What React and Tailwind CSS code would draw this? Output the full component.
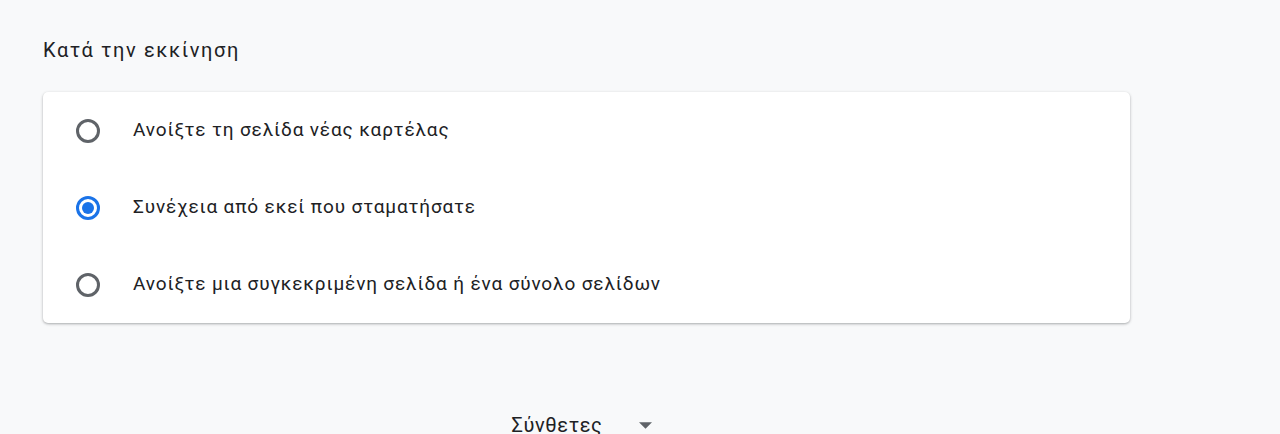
export default function App() {
  const options = [
    { label: "Ανοίξτε τη σελίδα νέας καρτέλας", checked: false },
    { label: "Συνέχεια από εκεί που σταματήσατε", checked: true },
    { label: "Ανοίξτε μια συγκεκριμένη σελίδα ή ένα σύνολο σελίδων", checked: false },
  ];
  return (
    <div className="w-[1280px] h-[434px] overflow-hidden bg-[#f8f9fa] text-[#202124]" style={{ fontFamily: "Roboto, 'Noto Sans', sans-serif" }}>
      <div className="w-[1087px] ml-[43px]">
        <div className="pt-[36px] h-[92px] text-[20px] leading-[28px] tracking-[1.6px]">Κατά την εκκίνηση</div>
        <div className="bg-white rounded-[5px] shadow-[0_1px_3px_rgba(60,64,67,0.3),0_1px_2px_rgba(60,64,67,0.15)]">
          {options.map((o, i) => (
            <div key={i} className="h-[77px] flex items-center pl-[33px]">
              {o.checked ? (
                <span className="w-[24px] h-[24px] rounded-full border-[3px] border-[#1a73e8] flex items-center justify-center shrink-0">
                  <span className="w-[12px] h-[12px] rounded-full bg-[#1a73e8]" />
                </span>
              ) : (
                <span className="w-[24px] h-[24px] rounded-full border-[3px] border-[#5f6368] shrink-0" />
              )}
              <span className="ml-[33px] text-[19px] tracking-[0.85px]">{o.label}</span>
            </div>
          ))}
        </div>
        <div className="flex justify-center items-center mt-[88px] gap-[36px] pr-[10px] h-[28px]">
          <span className="text-[20px] leading-[28px] tracking-[0.6px] text-[#202124]">Σύνθετες</span>
          <svg width="13" height="7" viewBox="0 0 14 7"><path d="M0 0h14L7 7z" fill="#5f6368" /></svg>
        </div>
      </div>
    </div>
  );
}
